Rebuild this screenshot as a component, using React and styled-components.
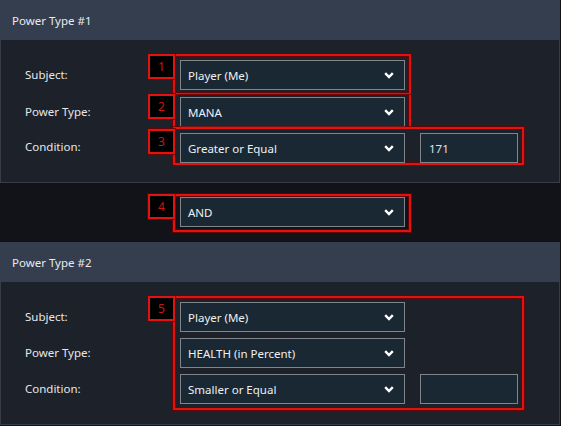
import React from 'react';
import styled, { createGlobalStyle } from 'styled-components';

const GlobalStyle = createGlobalStyle`
  html, body {
    margin: 0;
    padding: 0;
    background: #111318;
  }
  body {
    width: 561px;
    height: 426px;
    overflow: hidden;
    font-family: "Noto Sans", "Open Sans", sans-serif;
    font-size: 11.5px;
    color: #e6e8eb;
  }
`;

const Panel = styled.section`
  width: 560px;
  box-sizing: border-box;
`;

const Header = styled.div`
  height: 40px;
  background: #343e4e;
  padding-left: 12px;
  display: flex;
  align-items: center;
  color: #e8eaee;
`;

const Body = styled.div`
  background: #1d2129;
  border: 1px solid #373d48;
  border-top: none;
  padding: 14px 0 ${p => p.$bottom}px 24px;
`;

const Row = styled.div`
  display: flex;
  align-items: flex-start;
`;

const Label = styled.div`
  width: 123px;
  flex: none;
  align-self: center;
`;

const LabelColumn = styled.div`
  width: 123px;
  flex: none;
  display: flex;
  flex-direction: column;
  gap: 6px;
  padding-top: 6px;
`;

const StackLabel = styled.div`
  height: 30px;
  line-height: 30px;
`;

const Badge = styled.div`
  box-sizing: border-box;
  flex: none;
  width: 27px;
  height: 25px;
  margin-top: ${p => p.$mt || 0}px;
  margin-right: -2px;
  position: relative;
  z-index: 1;
  background: #000;
  border: 2px solid #e3120f;
  box-shadow: 0 0 0 1px rgba(110, 0, 0, 0.85);
  color: #c81616;
  font-size: 12px;
  display: flex;
  align-items: center;
  justify-content: center;
`;

const Frame = styled.div`
  display: flex;
  flex-direction: ${p => (p.$column ? 'column' : 'row')};
  gap: ${p => (p.$column ? 6 : 15)}px;
  border: 2px solid #e3120f;
  ${p => p.$noTop && 'border-top: none;'}
  ${p => p.$noBottom && 'border-bottom: none;'}
  padding: ${p => p.$pad};
  box-shadow: 0 0 0 1px rgba(110, 0, 0, 0.85), inset 0 0 0 1px rgba(110, 0, 0, 0.85);
`;

const Controls = styled.div`
  display: flex;
  gap: 15px;
`;

const SelectBox = styled.div`
  box-sizing: border-box;
  width: 225px;
  height: 30px;
  background: #1a2834;
  border: 1px solid #80858b;
  display: flex;
  align-items: center;
  justify-content: space-between;
  padding: 0 10px 0 7px;
  color: #eef0f2;
`;

const ValueInput = styled.input`
  box-sizing: border-box;
  width: 98px;
  height: 30px;
  background: #1a2834;
  border: 1px solid #80858b;
  padding: 0 0 0 8px;
  margin: 0;
  outline: none;
  color: #dfe3e8;
  font-family: inherit;
  font-size: 11.5px;
`;

const Separator = styled.div`
  padding: 11px 0 10px 148px;
`;

const Chevron = () => (
  <svg width="10" height="7" viewBox="0 0 10 7">
    <polyline points="1.2,1.2 5,5 8.8,1.2" fill="none" stroke="#ffffff" strokeWidth="2.4" />
  </svg>
);

const Select = ({ value }) => (
  <SelectBox>
    <span>{value}</span>
    <Chevron />
  </SelectBox>
);

export default function App() {
  return (
    <>
      <GlobalStyle />
      <Panel>
        <Header>Power Type #1</Header>
        <Body $bottom={17}>
          <Row>
            <Label>Subject:</Label>
            <Badge>1</Badge>
            <Frame $pad="4px 4px 3px 5px">
              <Select value="Player (Me)" />
            </Frame>
          </Row>
          <Row>
            <Label>Power Type:</Label>
            <Badge $mt={-1}>2</Badge>
            <Frame $noTop $noBottom $pad="2px 4px 0 5px">
              <Select value="MANA" />
            </Frame>
          </Row>
          <Row>
            <Label>Condition:</Label>
            <Badge $mt={2}>3</Badge>
            <Frame $pad="4px 4px 0 5px">
              <Select value="Greater or Equal" />
              <ValueInput defaultValue="171" />
            </Frame>
          </Row>
        </Body>
      </Panel>

      <Separator>
        <Row>
          <Badge>4</Badge>
          <Frame $pad="1px 4px 3px 5px">
            <Select value="AND" />
          </Frame>
        </Row>
      </Separator>

      <Panel>
        <Header>Power Type #2</Header>
        <Body $bottom={14}>
          <Row>
            <LabelColumn>
              <StackLabel>Subject:</StackLabel>
              <StackLabel>Power Type:</StackLabel>
              <StackLabel>Condition:</StackLabel>
            </LabelColumn>
            <Badge>5</Badge>
            <Frame $column $pad="4px 4px 4px 5px">
              <Controls>
                <Select value="Player (Me)" />
              </Controls>
              <Controls>
                <Select value="HEALTH (in Percent)" />
              </Controls>
              <Controls>
                <Select value="Smaller or Equal" />
                <ValueInput defaultValue="" />
              </Controls>
            </Frame>
          </Row>
        </Body>
      </Panel>
    </>
  );
}
